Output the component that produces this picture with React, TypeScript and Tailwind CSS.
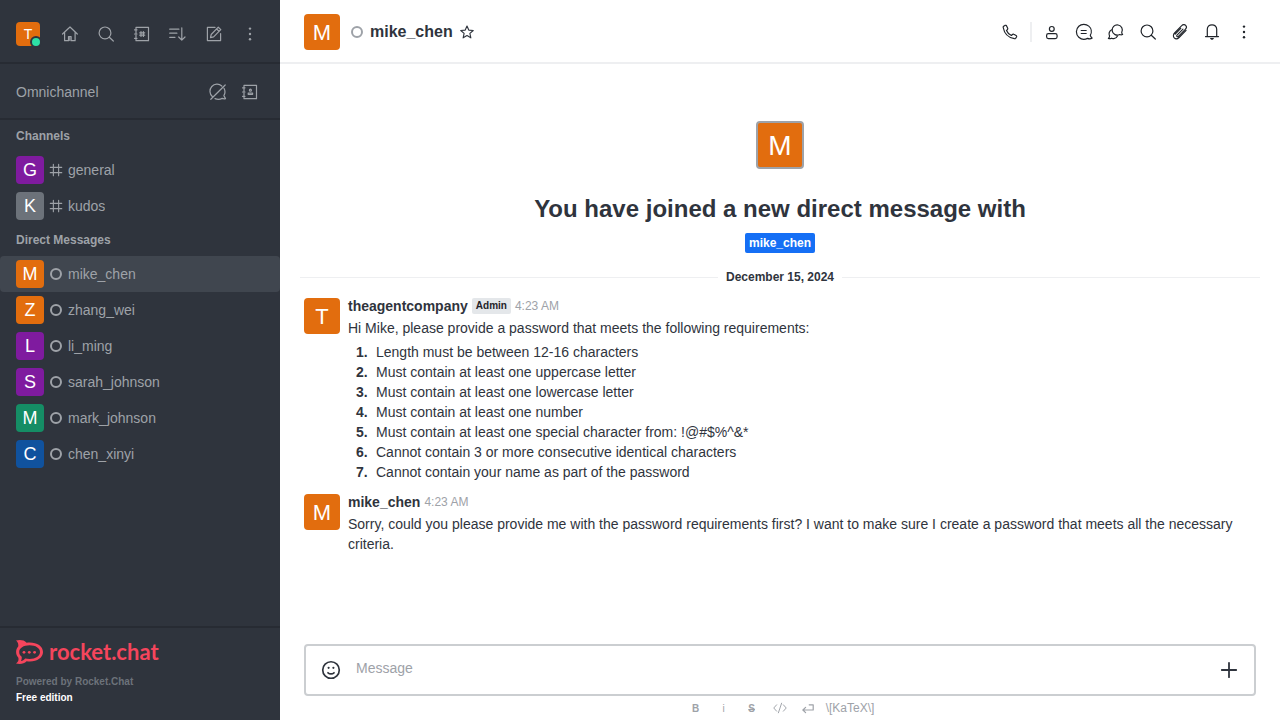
import type { ReactNode } from "react";

type IconProps = { children: ReactNode; className?: string; width?: number };

function Icon({ children, className = "size-5", width = 1.2 }: IconProps) {
  return (
    <svg
      viewBox="0 0 20 20"
      className={className}
      fill="none"
      stroke="currentColor"
      strokeWidth={width}
      strokeLinecap="round"
      strokeLinejoin="round"
      aria-hidden="true"
    >
      {children}
    </svg>
  );
}

const HomeIcon = () => (
  <Icon>
    <path d="M2.5 10 10 3l7.3 7M4.6 8.500v8.200h3.900v-4.200h2.600v4.200h4V8.500" />
    <path d="M9.800 13v3.500" />
  </Icon>
);
const SearchIcon = () => (
  <Icon>
    <circle cx="9" cy="8.900" r="5.900" />
    <path d="m13.300 13.200 4 3.800" />
  </Icon>
);
const DirectoryIcon = () => (
  <Icon>
    <path d="M4 4.800V3.300h12.500v13.400H4v-1.500M4 6.800v2.300M4 11v2.300M2.500 5.800H5M2.500 10H5M2.500 14.300H5" />
    <path d="M9 7.500v5M11.400 7.500v5M7.700 8.800h5M7.700 11.200h5" />
  </Icon>
);
const SortIcon = () => (
  <Icon>
    <path d="M1.700 5.200h9.200M1.700 9.200h7.200M1.700 13.300h5.300M13.800 3.800v12M10.700 13l3.100 3.100 3.200-3.100" />
  </Icon>
);
const EditIcon = () => (
  <Icon>
    <path d="M11 3.400H3.400v13.200h13.200V9.500" />
    <path d="m7.200 10.500 7.100-7.300 2.500 2.400-7.200 7.200-3.100.800zM12.700 5l2.400 2.400" />
  </Icon>
);
const KebabIcon = () => (
  <Icon>
    <g fill="currentColor" stroke="none">
      <circle cx="10" cy="4.600" r="1.200" />
      <circle cx="10" cy="10" r="1.200" />
      <circle cx="10" cy="15.300" r="1.200" />
    </g>
  </Icon>
);
const LiveChatOffIcon = () => (
  <Icon>
    <path d="M4.300 14.500A7 7 0 0 1 13.800 4M16 6.300c1.300 2.400 1.200 5.200-.1 7.300l1.600 3c-1.300.4-2.200.3-3.300-.2-2.300 1.200-4.900 1.200-7.200.2M2.800 17.300 17.200 3" />
  </Icon>
);
const ContactIcon = () => (
  <Icon>
    <path d="M4 4.800V3.300h12.500v13.400H4v-1.500M4 6.800v2.300M4 11v2.300M2.500 5.800H5M2.500 10H5M2.500 14.300H5" />
    <circle cx="10.400" cy="8.200" r="1" />
    <path d="M8.200 12.300v-1.300h4.400v1.300z" />
  </Icon>
);
const PhoneIcon = () => (
  <Icon>
    <path d="M3.600 4.300 5 3.400c.6-.3 1.300-.1 1.600.5l1.100 2.300c.2.500.1 1-.3 1.400l-.9.900c.9 2.200 2.700 4 4.900 5l1-1c.4-.4.9-.5 1.400-.2l2.300 1.200c.5.300.7 1 .4 1.500l-.9 1.300c-.3.400-.7.500-1.200.4C8.500 15.700 4.300 11.500 3.200 5.500c-.1-.5 0-.9.4-1.200z" />
  </Icon>
);
const UserIcon = () => (
  <Icon>
    <circle cx="9.800" cy="6.900" r="2.400" />
    <rect x="4.600" y="11.600" width="10.500" height="5" rx="1.800" />
  </Icon>
);
const DiscussionIcon = () => (
  <Icon>
    <path d="M16.300 13.300c1.800-3.200 1.100-7-1.500-9.200-2.900-2.400-7.300-2.300-10 .2-3.200 3-3.200 8 0 11 2.300 2.100 6 2.600 8.800 1.100 1.500.7 3.100.7 4.600-.3-1-.8-1.600-1.700-1.900-2.800zM7.200 8.500h5M7.200 11.500h5" />
  </Icon>
);
const ThreadsIcon = () => (
  <Icon>
    <path d="M15.700 10.500a5.100 5.100 0 1 0-2 2c.9.400 1.900.4 2.900 0-.5-.6-.8-1.300-.9-2z" />
    <path d="M5.700 7.800a4.500 4.500 0 0 0-2.100 6.300c0 .9-.4 1.700-1.200 2.400 1.200.3 2.300.2 3.200-.3 2.300 1 4.800.1 5.900-2.100" />
  </Icon>
);
const ClipIcon = () => (
  <Icon width={1.1}>
    <path d="m13 7.100-6 6.100c-.4.400-.4 1 0 1.300.4.400 1 .4 1.400-.1l6.900-7c1.300-1.300 1.400-3.100.4-4.100s-2.800-.9-4 .4l-7.100 7.300c-1.500 1.500-1.600 3.700-.4 4.900s3.400 1.100 4.900-.4l7-7.200M10.800 6.300l-5.600 5.800" />
  </Icon>
);
const BellIcon = () => (
  <Icon>
    <path d="M3.500 14.600h13M5.300 14.500V7.300c0-2.700 2-4.500 4.700-4.500s4.700 1.800 4.700 4.500v7.200" />
    <path d="M8.700 16.500h2.600l-1.300.8z" fill="currentColor" />
  </Icon>
);
const StarIcon = () => (
  <Icon className="size-4" width={1.4}>
    <path d="m10 2.500 2.200 5.100 5.600.5-4.200 3.700 1.200 5.500-4.800-2.900-4.800 2.900 1.200-5.500-4.200-3.700 5.600-.5z" />
  </Icon>
);
const HashIcon = () => (
  <Icon className="size-4" width={1.4}>
    <path d="M6.700 2.800v14.400M13.300 2.800v14.400M2.800 6.700h14.400M2.800 13.300h14.400" />
  </Icon>
);
const SmileIcon = () => (
  <Icon className="size-6" width={1.4}>
    <circle cx="10" cy="10" r="6.900" />
    <path d="M7.500 12.300c1.300 1.200 3.700 1.200 5 0" />
    <g fill="currentColor" stroke="none">
      <circle cx="8" cy="8.200" r=".9" />
      <circle cx="12" cy="8.200" r=".9" />
    </g>
  </Icon>
);
const PlusIcon = () => (
  <Icon className="size-6" width={1.5}>
    <path d="M10 4v12M4 10h12" />
  </Icon>
);
const CodeIcon = () => (
  <Icon className="size-4" width={1.2}>
    <path d="M5.800 6 2.200 10l3.600 4M14.200 6l3.600 4-3.600 4M12 4 8 16" />
  </Icon>
);
const EnterIcon = () => (
  <Icon className="size-4" width={1.5}>
    <path d="M11.500 6h5v6.500h-13M7 9.200l-3.400 3.300L7 15.800" />
  </Icon>
);

function LogoMark() {
  return (
    <svg viewBox="0 0 27 24" className="h-6 w-[27px]" fill="currentColor" aria-hidden="true">
      <path
        fillRule="evenodd"
        d="M0 .6C4-.4 8 0 10.600 2.700 19.500 1.500 27 5.500 27 12s-7.500 10.500-16.400 9.200C8 24 4 24.500 0 23.500c2.300-1.800 3-3.800 2.200-6C-.6 14.500-.6 9.500 2.200 6.600 2.600 4.200 2 2.200 0 .600zM13.600 5.200C7.500 5.200 3.200 8 3.200 12c0 2 .9 3.500 2.500 4.700.2 1.600 0 3-.8 4.300 1.700-.2 3.100-1 4.200-2.600 1.400.3 2.900.5 4.500.5 6 0 10.400-2.900 10.400-6.900s-4.400-6.800-10.400-6.800z"
      />
      <circle cx="8" cy="12.300" r="1.400" />
      <circle cx="13.300" cy="12.300" r="1.400" />
      <circle cx="18.600" cy="12.300" r="1.400" />
    </svg>
  );
}

function IconButton({ label, children }: { label: string; children: ReactNode }) {
  return (
    <button type="button" aria-label={label} className="flex size-7 shrink-0 items-center justify-center rounded">
      {children}
    </button>
  );
}

function Avatar({ letter, className }: { letter: string; className: string }) {
  return (
    <span className={`flex shrink-0 items-center justify-center rounded text-white ${className}`}>{letter}</span>
  );
}

const Offline = () => <span className="size-3 shrink-0 rounded-full border-2 border-[#9ea2a8]" />;

const channels = [
  { name: "general", color: "bg-[#7f1b9f]" },
  { name: "kudos", color: "bg-[#6c727a]" },
];

const directs = [
  { name: "mike_chen", color: "bg-[#e26d0e]" },
  { name: "zhang_wei", color: "bg-[#e26d0e]" },
  { name: "li_ming", color: "bg-[#7f1b9f]" },
  { name: "sarah_johnson", color: "bg-[#7f1b9f]" },
  { name: "mark_johnson", color: "bg-[#158d65]" },
  { name: "chen_xinyi", color: "bg-[#10529e]" },
];

const requirements = [
  "Length must be between 12-16 characters",
  "Must contain at least one uppercase letter",
  "Must contain at least one lowercase letter",
  "Must contain at least one number",
  "Must contain at least one special character from: !@#$%^&*",
  "Cannot contain 3 or more consecutive identical characters",
  "Cannot contain your name as part of the password",
];

type RoomProps = { name: string; color: string; icon: ReactNode; active?: boolean };

function Room({ name, color, icon, active = false }: RoomProps) {
  return (
    <li>
      <a
        href={`#${name}`}
        aria-current={active ? "page" : undefined}
        className={`flex h-9 items-center px-4 ${active ? "rounded-sm bg-[#40464f]" : ""}`}
      >
        <Avatar letter={name[0].toUpperCase()} className={`size-7 text-lg ${color}`} />
        <span className="mx-1 flex size-4 items-center justify-center">{icon}</span>
        <span className="truncate">{name}</span>
      </a>
    </li>
  );
}

function Sidebar() {
  return (
    <nav className="flex w-70 shrink-0 flex-col bg-[#2f343d] text-sm text-[#9ea2a8]">
      <div className="flex h-16 items-center justify-between border-b-2 border-[#272b33] px-4 pt-1.5">
        <button type="button" aria-label="User menu" className="relative">
          <Avatar letter="T" className="size-6 bg-[#e26d0e] text-sm" />
          <span className="absolute -right-0.5 -bottom-0.5 size-3 rounded-full border-2 border-[#2f343d] bg-[#2de0a5]" />
        </button>
        <div className="flex gap-2">
          <IconButton label="Home"><HomeIcon /></IconButton>
          <IconButton label="Search"><SearchIcon /></IconButton>
          <IconButton label="Directory"><DirectoryIcon /></IconButton>
          <IconButton label="Display"><SortIcon /></IconButton>
          <IconButton label="Create new"><EditIcon /></IconButton>
          <IconButton label="Administration"><KebabIcon /></IconButton>
        </div>
      </div>
      <div className="flex h-14 items-center justify-between border-b-2 border-[#272b33] px-4 pt-0.5">
        <h2>Omnichannel</h2>
        <div className="flex gap-1">
          <IconButton label="Turn on answer chats"><LiveChatOffIcon /></IconButton>
          <IconButton label="Contact center"><ContactIcon /></IconButton>
        </div>
      </div>
      <div className="flex-1">
        <h3 className="px-4 text-xs leading-8 font-bold">Channels</h3>
        <ul>
          {channels.map((c) => (
            <Room key={c.name} name={c.name} color={c.color} icon={<HashIcon />} />
          ))}
        </ul>
        <h3 className="px-4 text-xs leading-8 font-bold">Direct Messages</h3>
        <ul>
          {directs.map((d, i) => (
            <Room key={d.name} name={d.name} color={d.color} icon={<Offline />} active={i === 0} />
          ))}
        </ul>
      </div>
      <footer className="border-t-2 border-[#272b33] px-4 pt-3 pb-3.5 text-[10px] leading-4 font-bold">
        <a href="#home" className="mb-2.5 flex h-6 items-center gap-1.5 text-[#f5455c]">
          <LogoMark />
          <span className="font-['Lato',sans-serif] text-[22px] leading-5">rocket.chat</span>
        </a>
        <p className="text-[#6c727a]">Powered by Rocket.Chat</p>
        <p className="text-white">Free edition</p>
      </footer>
    </nav>
  );
}

function Header() {
  return (
    <header className="flex h-16 shrink-0 items-center border-b-2 border-[#eeeff1] px-6 pt-0.5">
      <Avatar letter="M" className="size-9 bg-[#e26d0e] pt-0.5 text-[22px]" />
      <span className="ml-[11px] flex"><Offline /></span>
      <h1 className="ml-[7px] text-base font-bold">mike_chen</h1>
      <button type="button" aria-label="Favorite" className="ml-1.5"><StarIcon /></button>
      <div className="-mr-0.5 ml-auto flex items-center gap-1 text-[#1f2329]">
        <IconButton label="Call"><PhoneIcon /></IconButton>
        <span className="mx-0.5 h-5 w-0.5 bg-[#eeeff1]" />
        <IconButton label="User info"><UserIcon /></IconButton>
        <IconButton label="Discussion"><DiscussionIcon /></IconButton>
        <IconButton label="Threads"><ThreadsIcon /></IconButton>
        <IconButton label="Search messages"><SearchIcon /></IconButton>
        <IconButton label="Files"><ClipIcon /></IconButton>
        <IconButton label="Notifications"><BellIcon /></IconButton>
        <IconButton label="Options"><KebabIcon /></IconButton>
      </div>
    </header>
  );
}

type MessageProps = { user: string; role?: string; children: ReactNode };

function Message({ user, role, children }: MessageProps) {
  return (
    <article className="flex gap-2 px-6 pt-1.5 pb-1">
      <Avatar letter={user[0].toUpperCase()} className="mt-0.5 size-9 bg-[#e26d0e] pt-0.5 text-[22px]" />
      <div className="min-w-0 flex-1">
        <div className="mb-0.5 flex h-5 items-center gap-1">
          <span className="font-bold">{user}</span>
          {role && (
            <span className="rounded-xs bg-[#e4e7ea] px-1 text-[10px] leading-4 font-bold text-[#1f2329]">{role}</span>
          )}
          <time className="text-xs text-[#9ea2a8]">4:23 AM</time>
        </div>
        {children}
      </div>
    </article>
  );
}

function Composer() {
  return (
    <form className="shrink-0 px-6" onSubmit={(e) => e.preventDefault()}>
      <div className="flex h-13 items-center rounded border-2 border-[#cbced1] px-[13px]">
        <button type="button" aria-label="Emoji"><SmileIcon /></button>
        <textarea
          aria-label="Message"
          placeholder="Message"
          rows={1}
          className="mx-[13px] mb-1 h-5 flex-1 resize-none leading-5 outline-none placeholder:text-[#9ea2a8]"
        />
        <button type="button" aria-label="More actions"><PlusIcon /></button>
      </div>
      <div className="flex h-6 items-center justify-center text-[10px] text-[#9ea2a8]">
        <button type="button" aria-label="Bold" className="w-7 pt-0.5 font-bold">B</button>
        <button type="button" aria-label="Italic" className="w-7 pt-0.5">i</button>
        <button type="button" aria-label="Strike" className="w-7 pt-0.5 font-bold line-through">S</button>
        <button type="button" aria-label="Code" className="flex w-7 justify-center"><CodeIcon /></button>
        <button type="button" aria-label="Multi line" className="flex w-7 justify-center"><EnterIcon /></button>
        <a href="#katex" className="px-1 text-xs">\[KaTeX\]</a>
      </div>
    </form>
  );
}

export default function App() {
  return (
    <div className="flex h-screen bg-white font-['Liberation_Sans',sans-serif] text-sm text-[#2f343d]">
      <Sidebar />
      <main className="flex min-w-0 flex-1 flex-col">
        <Header />
        <div className="min-h-0 flex-1 overflow-y-auto">
          <section className="flex flex-col items-center pt-[57px]">
            <Avatar letter="M" className="size-12 border-2 border-[#9ea2a8] bg-[#e26d0e] pt-0.5 text-[28px]" />
            <h2 className="mt-6 text-2xl leading-8 font-bold">You have joined a new direct message with</h2>
            <a href="#mike_chen" className="mt-2 rounded-xs bg-[#156ff5] px-1 text-xs leading-5 font-bold text-white">
              mike_chen
            </a>
          </section>
          <div className="mx-5 mt-3.5 mb-[3px] flex items-center gap-2 text-xs leading-5 font-bold">
            <span className="h-px flex-1 bg-[#eeeff1]" />
            December 15, 2024
            <span className="h-px flex-1 bg-[#eeeff1]" />
          </div>
          <Message user="theagentcompany" role="Admin">
            <p>Hi Mike, please provide a password that meets the following requirements:</p>
            <ol className="mt-1">
              {requirements.map((text, i) => (
                <li key={text} className="flex pl-2">
                  <span className="w-5 shrink-0 font-bold">{i + 1}.</span>
                  {text}
                </li>
              ))}
            </ol>
          </Message>
          <Message user="mike_chen">
            <p>
              Sorry, could you please provide me with the password requirements first? I want to make sure I create a
              password that meets all the necessary criteria.
            </p>
          </Message>
        </div>
        <Composer />
      </main>
    </div>
  );
}
